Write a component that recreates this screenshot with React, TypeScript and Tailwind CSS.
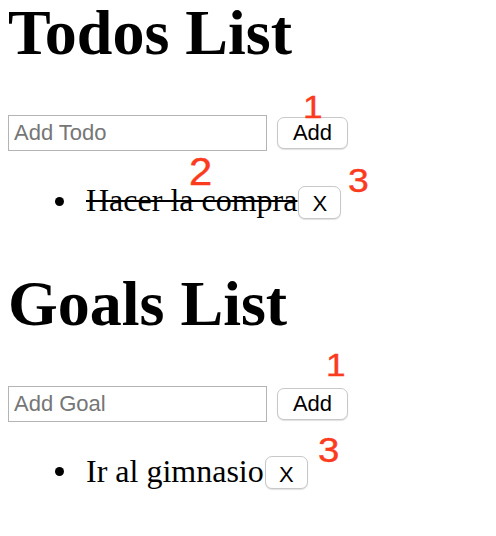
import { useState } from "react";

type Item = { id: number; name: string; complete?: boolean };

const ListSection = ({
  title,
  placeholder,
  items,
  onAdd,
  onRemove,
  onToggle,
  className,
}: {
  title: string;
  placeholder: string;
  items: Item[];
  onAdd: (name: string) => void;
  onRemove: (id: number) => void;
  onToggle?: (id: number) => void;
  className?: string;
}) => {
  const [value, setValue] = useState("");

  return (
    <div className={className}>
      <h1 className="text-[64px] leading-[64px] font-bold font-['Liberation_Serif',serif]">
        {title}
      </h1>
      <div className="mt-[50px] flex items-center gap-[10px]">
        <input
          type="text"
          value={value}
          onChange={(e) => setValue(e.target.value)}
          placeholder={placeholder}
          className="w-[259px] h-[36px] border border-[#b4b4b4] px-[5px] text-[22px] font-['Liberation_Sans',sans-serif] placeholder:text-[#767676] outline-none"
        />
        <button
          onClick={() => {
            if (!value.trim()) return;
            onAdd(value);
            setValue("");
          }}
          className="w-[71px] h-[32px] bg-white border border-[#c8c8c8] rounded-[7px] shadow-[0_1px_1px_rgba(0,0,0,0.12)] text-[22px] leading-none font-['Liberation_Sans',sans-serif] text-black"
        >
          Add
        </button>
      </div>
      <ul className="mt-[33px] flex flex-col">
        {items.map((item) => (
          <li key={item.id} className="flex items-baseline">
            <span className="self-center ml-[47px] mr-[22px] w-[9px] h-[9px] rounded-full bg-black" />
            <span
              onClick={() => onToggle && onToggle(item.id)}
              className={
                "text-[32px] leading-[33px] font-['Liberation_Serif',serif] cursor-pointer " +
                (item.complete ? "line-through decoration-[2px]" : "")
              }
            >
              {item.name}
            </span>
            <button
              onClick={() => onRemove(item.id)}
              className="ml-[1px] w-[43px] h-[33px] pt-[4px] inline-flex items-center justify-center bg-white border border-[#c8c8c8] rounded-[7px] shadow-[0_1px_1px_rgba(0,0,0,0.12)] text-[22px] leading-none font-['Liberation_Sans',sans-serif] text-black"
            >
              X
            </button>
          </li>
        ))}
      </ul>
    </div>
  );
};

export default function App() {
  const [todos, setTodos] = useState<Item[]>([
    { id: 1, name: "Hacer la compra", complete: true },
  ]);
  const [goals, setGoals] = useState<Item[]>([{ id: 1, name: "Ir al gimnasio" }]);

  return (
    <div className="relative w-[496px] h-[536px] bg-white text-black overflow-hidden pt-[1px] px-[8px]">
      <ListSection
        title="Todos List"
        placeholder="Add Todo"
        items={todos}
        onAdd={(name) => setTodos((prev) => [...prev, { id: Date.now(), name }])}
        onRemove={(id) => setTodos((prev) => prev.filter((t) => t.id !== id))}
        onToggle={(id) =>
          setTodos((prev) =>
            prev.map((t) => (t.id === id ? { ...t, complete: !t.complete } : t))
          )
        }
      />
      <ListSection
        className="mt-[53px]"
        title="Goals List"
        placeholder="Add Goal"
        items={goals}
        onAdd={(name) => setGoals((prev) => [...prev, { id: Date.now(), name }])}
        onRemove={(id) => setGoals((prev) => prev.filter((g) => g.id !== id))}
      />

      {/* annotations */}
      <span className="absolute left-[303px] top-[91px] text-[32px] leading-none text-[#fb3b1e] [-webkit-text-stroke:0.4px_#fb3b1e] font-['Liberation_Sans',sans-serif] scale-x-[1.1] origin-left">
        1
      </span>
      <span className="absolute left-[189px] top-[153px] text-[38px] leading-none text-[#fb3b1e] [-webkit-text-stroke:0.4px_#fb3b1e] font-['Liberation_Sans',sans-serif] scale-x-[1.1] origin-left">
        2
      </span>
      <span className="absolute left-[348px] top-[163px] text-[34px] leading-none text-[#fb3b1e] [-webkit-text-stroke:0.4px_#fb3b1e] font-['Liberation_Sans',sans-serif] scale-x-[1.1] origin-left">
        3
      </span>
      <span className="absolute left-[326px] top-[349px] text-[32px] leading-none text-[#fb3b1e] [-webkit-text-stroke:0.4px_#fb3b1e] font-['Liberation_Sans',sans-serif] scale-x-[1.1] origin-left">
        1
      </span>
      <span className="absolute left-[318px] top-[432px] text-[35px] leading-none text-[#fb3b1e] [-webkit-text-stroke:0.4px_#fb3b1e] font-['Liberation_Sans',sans-serif] scale-x-[1.1] origin-left">
        3
      </span>
    </div>
  );
}
